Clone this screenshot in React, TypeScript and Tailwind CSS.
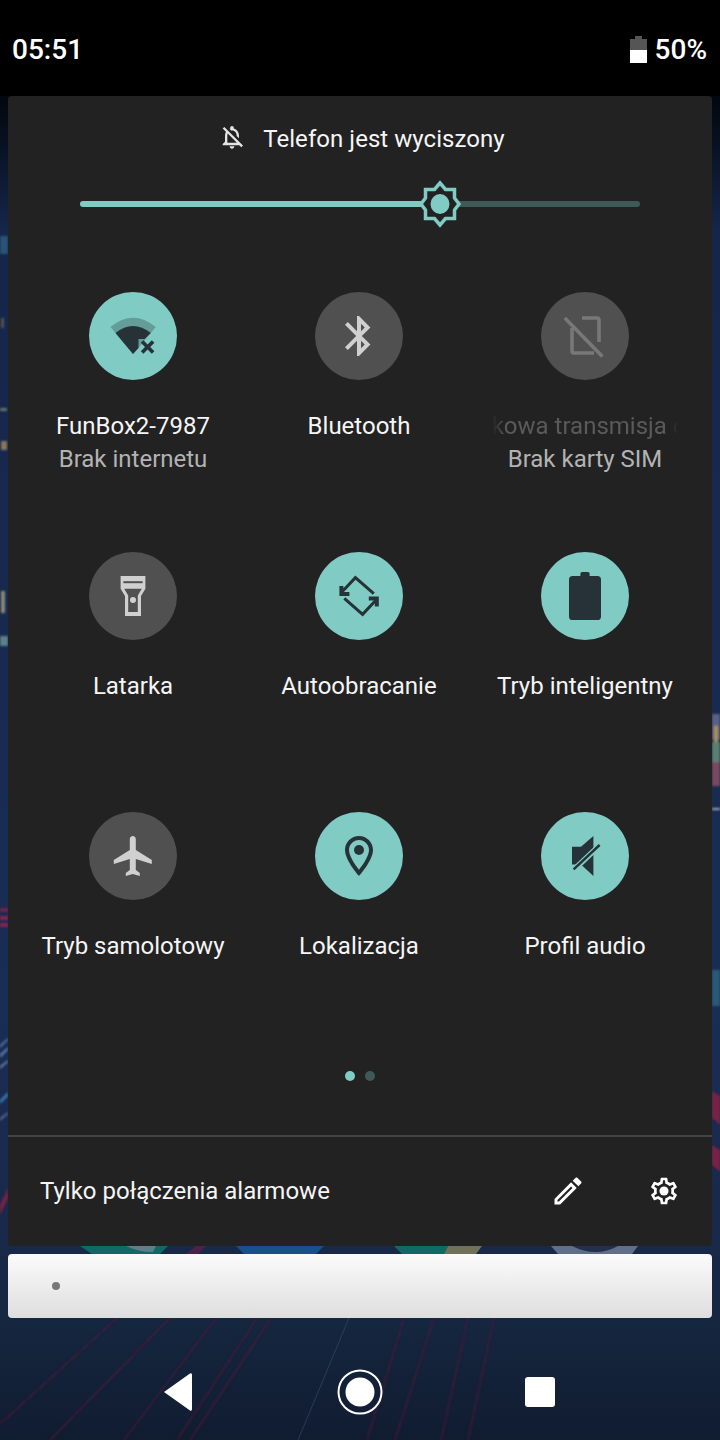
import React from 'react';

const DARK = '#263238';
const LIGHT = '#d0d0d0';

const Wallpaper = () => (
  <svg className="absolute inset-0 h-full w-full" viewBox="0 0 720 1440">
    <defs>
      <linearGradient id="wall" x1="0" y1="0" x2="0" y2="1">
        <stop offset="0" stopColor="#000000" />
        <stop offset="0.07" stopColor="#03070f" />
        <stop offset="0.16" stopColor="#14264a" />
        <stop offset="0.7" stopColor="#1a2d55" />
        <stop offset="0.86" stopColor="#18294a" />
        <stop offset="0.92" stopColor="#15263f" />
        <stop offset="1" stopColor="#101c30" />
      </linearGradient>
      <filter id="soft">
        <feGaussianBlur stdDeviation="1.2" />
      </filter>
      <filter id="trail">
        <feGaussianBlur stdDeviation="0.8" />
      </filter>
    </defs>
    <rect width="720" height="1440" fill="url(#wall)" />
    {/* left edge streaks */}
    <g filter="url(#soft)">
      <rect x="0" y="236" width="8" height="18" fill="#2f5f80" opacity="0.8" />
      <rect x="1" y="318" width="3" height="10" fill="#8a6a50" opacity="0.6" />
      <rect x="0" y="408" width="7" height="3" fill="#8a8f80" opacity="0.7" />
      <rect x="1" y="441" width="6" height="9" fill="#a88a60" opacity="0.8" />
      <rect x="1" y="591" width="4" height="22" fill="#8c8a78" />
      <rect x="0" y="636" width="8" height="10" fill="#5b8088" />
      <rect x="0" y="908" width="8" height="4" fill="#6d2048" />
      <rect x="0" y="916" width="8" height="4" fill="#8a2348" />
      <rect x="0" y="923" width="8" height="4" fill="#8a2348" />
      <path d="M0 1045L8 1038V1040L0 1048Z" fill="#5a7aa8" />
      <path d="M0 1054L8 1047V1050L0 1058Z" fill="#5a7aa8" />
      <path d="M0 1066L8 1060V1062L0 1069Z" fill="#6a80a0" />
      <path d="M0 1100L8 1092V1096L0 1104Z" fill="#3d78b0" />
      <path d="M0 1118L8 1112V1114L0 1121Z" fill="#5a6a90" />
      <path d="M0 1205L8 1188V1198L0 1215Z" fill="#7a2044" />
    </g>
    {/* right edge streaks */}
    <g filter="url(#soft)">
      <rect x="712" y="714" width="8" height="26" fill="#5b6088" />
      <rect x="714" y="726" width="4" height="18" fill="#a89050" />
      <rect x="712" y="742" width="8" height="20" fill="#5a8070" />
      <rect x="712" y="762" width="8" height="24" fill="#7a4a60" />
      <rect x="712" y="808" width="8" height="2" fill="#a0a8b8" />
      <rect x="712" y="970" width="8" height="36" fill="#2c5a78" />
      <path d="M712 1091L720 1096V1125L712 1118Z" fill="#7a2044" />
      <path d="M712 1145L720 1150V1172L712 1165Z" fill="#7a2044" />
    </g>
    {/* dock icons peeking out behind the panel */}
    <path d="M80 1246H168L160 1254H92Z" fill="#0f6a66" />
    <path d="M126 1246H156L153 1252Q138 1252 126 1246Z" fill="#5f7d8a" />
    <path d="M236 1246H324L316 1254H244Z" fill="#1a4f8a" />
    <path d="M394 1246H448L444 1254H402Z" fill="#0f6a66" />
    <path d="M448 1246H482L476 1254H444Z" fill="#6f7258" />
    <path d="M551 1246H638L632 1254H558Z" fill="#5f6f8a" />
    <path d="M572 1246H618Q596 1258 572 1246Z" fill="#22304e" />
    <path d="M186 1254L196 1246H206L198 1254Z" fill="#5a2048" opacity="0.8" />
    {/* road light trails */}
    <g stroke="#4e1a3a" strokeWidth="2" opacity="0.65" fill="none" filter="url(#trail)">
      <path d="M117 1318L0 1424" />
      <path d="M170 1318L50 1440" />
      <path d="M216 1318L124 1440" />
      <path d="M257 1318L177 1440" />
      <path d="M271 1318L190 1440" />
      <path d="M404 1318L367 1440" />
      <path d="M434 1318L395 1440" />
      <path d="M468 1318L441 1440" />
      <path d="M494 1318L468 1440" />
    </g>
    <path d="M349 1318L298 1440" stroke="#34476a" strokeWidth="1" opacity="0.7" />
  </svg>
);

const WifiIcon = () => (
  <svg width="48" height="48" viewBox="0 0 24 24" fill={DARK}>
    <path d="M.75 7.5Q12-1.8 23.35 7.5L14.75 18 12 21Z" opacity="0.3" />
    <path d="M3.25 10.5Q12 3.5 20.9 10.5L17.8 13.5H14.75V18L12 21Z" />
    <path d="M15.9 15.4L17.2 14.1L19.3 16.2L21.4 14.1L22.7 15.4L20.6 17.5L22.7 19.6L21.4 20.9L19.3 18.8L17.2 20.9L15.9 19.6L18 17.5Z" />
  </svg>
);

const BluetoothIcon = () => (
  <svg width="48" height="48" viewBox="0 0 24 24" fill={LIGHT}>
    <path d="M17.71 7.71L12 2h-1v7.59L6.41 5 5 6.41 10.59 12 5 17.59 6.41 19 11 14.41V22h1l5.71-5.71-4.3-4.29 4.3-4.29zM13 5.83l1.88 1.88L13 9.59V5.83zm1.88 10.46L13 18.17v-3.76l1.88 1.88z" />
  </svg>
);

const SimOffIcon = () => (
  <svg width="48" height="48" viewBox="0 0 24 24" fill="none" stroke="#787878" strokeWidth="1.8">
    <path d="M10.5 3H18Q19 3 19 4V15M5.5 8V19.5Q5.5 20.5 6.5 20.5H16.5" />
    <path d="M1.9 3L20.7 22.2" />
  </svg>
);

const FlashlightIcon = () => (
  <svg width="48" height="48" viewBox="0 0 24 24" fill={LIGHT}>
    <path d="M5.8 2H18.2V8.4L16 12V22H8V12L5.8 8.4Z" />
    <path d="M7.2 4.6H16.8V5.6H7.2Z" fill="#505050" />
    <path d="M7.6 8.4H16.4L14.4 11.8V20H9.6V11.8Z" fill="#505050" />
    <circle cx="12" cy="14" r="1.5" />
  </svg>
);

const RotateIcon = () => (
  <svg width="48" height="48" viewBox="0 0 24 24" fill="none" stroke={DARK} strokeWidth="1.5">
    <path d="M19.4 10.85L10.2 2.8L3.8 9.6" />
    <path d="M3.2 7V11H7.2" strokeWidth="2" />
    <path d="M4.65 13.15L13.8 21.2L20.2 14.4" />
    <path d="M16.9 13.2H20.9V17.2" strokeWidth="2" />
  </svg>
);

const BatteryIcon = () => (
  <svg width="48" height="48" viewBox="0 0 24 24" fill={DARK}>
    <path d="M9.7.8Q9.7 0 10.5 0H13.5Q14.3 0 14.3.8V2H18.2Q20 2 20 3.8V22.2Q20 24 18.2 24H5.8Q4 24 4 22.2V3.8Q4 2 5.8 2H9.7Z" />
  </svg>
);

const PlaneIcon = () => (
  <svg width="48" height="48" viewBox="0 0 24 24" fill={LIGHT}>
    <path transform="translate(0.4 0)" d="M21 16v-2l-8-5V3.5c0-.83-.67-1.5-1.5-1.5S10 2.67 10 3.5V9l-8 5v2l8-2.5V19l-2 1.5V22l3.5-1 3.5 1v-1.5L13 19v-5.5l8 2.5z" />
  </svg>
);

const PinIcon = () => (
  <svg width="48" height="48" viewBox="0 0 24 24" fill={DARK}>
    <path d="M12 2C8.13 2 5 5.13 5 9c0 5.25 7 13 7 13s7-7.75 7-13c0-3.87-3.13-7-7-7zM7 9c0-2.76 2.24-5 5-5s5 2.24 5 5c0 2.88-2.88 7.19-5 9.88C9.92 16.21 7 11.85 7 9z" />
    <circle cx="12" cy="9" r="2.5" />
  </svg>
);

const MuteIcon = () => (
  <svg width="48" height="48" viewBox="0 0 24 24" fill="none">
    <path d="M5.5 7.4H10L16.2 2V22L10 16.2H5.5Z" fill={DARK} />
    <path d="M20 6L6.3 19" stroke="#80cbc4" strokeWidth="2.8" />
    <path d="M19.3 6.5L6.3 18.7" stroke={DARK} strokeWidth="1.2" />
  </svg>
);

const BellOffIcon = () => (
  <svg width="28" height="28" viewBox="0 0 24 24" fill="#e4e4e4">
    <path d="M12 22c1.1 0 2-.9 2-2h-4c0 1.1.9 2 2 2zM12 6.5c2.49 0 4 2.02 4 4.5v.1l2 2V11c0-3.07-1.63-5.64-4.5-6.32V4c0-.83-.67-1.5-1.5-1.5s-1.5.67-1.5 1.5v.68c-.24.06-.47.15-.69.23l1.64 1.64c.18-.02.36-.05.55-.05zM5.41 3.35L4 4.76l2.81 2.81C6.29 8.57 6 9.74 6 11v5l-2 2v1h14.24l1.74 1.74 1.41-1.41L5.41 3.35zM16 17H8v-6c0-.68.12-1.32.34-1.9L16 16.76V17z" />
  </svg>
);

const BrightnessThumb = () => (
  <svg className="absolute left-[336px] top-0" width="48" height="48" viewBox="0 0 48 48">
    <path
      d="M24 3L29.5 9.5H38.5V18L43 24L38.5 30V38.5H29.5L24 45L18.5 38.5H9.5V30L5 24L9.5 18V9.5H18.5Z"
      fill="#222222"
      stroke="#80cbc4"
      strokeWidth="3.5"
    />
    <ellipse cx="24" cy="24" rx="9.5" ry="10" fill="#80cbc4" />
  </svg>
);

const PencilIcon = () => (
  <svg width="36" height="36" viewBox="0 0 24 24" fill="#ffffff">
    <path d="M14.06 9.02l.92.92L5.92 19H5v-.92l9.06-9.06M17.66 3c-.25 0-.51.1-.7.29l-1.83 1.83 3.75 3.75 1.83-1.83c.39-.39.39-1.02 0-1.41l-2.34-2.34c-.2-.2-.45-.29-.71-.29zm-3.6 3.19L3 17.25V21h3.75L17.81 9.94l-3.75-3.75z" />
  </svg>
);

const GearIcon = () => (
  <svg width="32" height="32" viewBox="0 0 24 24" fill="#ffffff">
    <path d="M19.43 12.98c.04-.32.07-.64.07-.98 0-.34-.03-.66-.07-.98l2.11-1.65c.19-.15.24-.42.12-.64l-2-3.46c-.09-.16-.26-.25-.44-.25-.06 0-.12.01-.17.03l-2.49 1c-.52-.4-1.08-.73-1.69-.98l-.38-2.65C14.46 2.18 14.25 2 14 2h-4c-.25 0-.46.18-.49.42l-.38 2.65c-.61.25-1.17.59-1.69.98l-2.49-1c-.06-.02-.12-.03-.18-.03-.17 0-.34.09-.43.25l-2 3.46c-.13.22-.07.49.12.64l2.11 1.65c-.04.32-.07.65-.07.98 0 .33.03.66.07.98l-2.11 1.65c-.19.15-.24.42-.12.64l2 3.46c.09.16.26.25.44.25.06 0 .12-.01.17-.03l2.49-1c.52.4 1.08.73 1.69.98l.38 2.65c.03.24.24.42.49.42h4c.25 0 .46-.18.49-.42l.38-2.65c.61-.25 1.17-.59 1.69-.98l2.49 1c.06.02.12.03.18.03.17 0 .34-.09.43-.25l2-3.46c.12-.22.07-.49-.12-.64l-2.11-1.65zm-1.98-1.71c.04.31.05.52.05.73 0 .21-.02.43-.05.73l-.14 1.13.89.7 1.08.84-.7 1.21-1.27-.51-1.04-.42-.9.68c-.43.32-.84.56-1.25.73l-1.06.43-.16 1.13-.2 1.35h-1.4l-.19-1.35-.16-1.13-1.06-.43c-.43-.18-.83-.41-1.23-.71l-.91-.7-1.06.43-1.27.51-.7-1.21 1.08-.84.89-.7-.14-1.13c-.03-.31-.05-.54-.05-.74s.02-.43.05-.73l.14-1.13-.89-.7-1.08-.84.7-1.21 1.27.51 1.04.42.9-.68c.43-.32.84-.56 1.25-.73l1.06-.43.16-1.13.2-1.35h1.39l.19 1.35.16 1.13 1.06.43c.43.18.83.41 1.23.71l.91.7 1.06-.43 1.27-.51.7 1.21-1.07.85-.89.7.14 1.13z" />
    <circle cx="12" cy="12" r="3.4" />
  </svg>
);

const Tile = ({ on, icon, label, sub, dim }: { on?: boolean; icon: React.ReactNode; label: string; sub?: string; dim?: boolean }) => (
  <div className="flex flex-col items-center">
    <div className={`flex h-[88px] w-[88px] items-center justify-center rounded-full ${on ? 'bg-[#80cbc4]' : 'bg-[#505050]'}`}>
      {icon}
    </div>
    {dim ? (
      <div className="mt-[30px] flex w-[186px] justify-center overflow-hidden whitespace-nowrap text-[#5a5a5a] [mask-image:linear-gradient(to_right,transparent,black_14px,black_172px,transparent)]">
        <span className="shrink-0 text-[24px] leading-[33px]">{label}</span>
      </div>
    ) : (
      <div className="mt-[30px] whitespace-nowrap text-[24px] leading-[33px] text-[#f5f5f5]">{label}</div>
    )}
    {sub && <div className="whitespace-nowrap text-[24px] leading-[33px] text-[#b3b3b3]">{sub}</div>}
  </div>
);

export default function App() {
  return (
    <div className="relative h-[1440px] w-[720px] overflow-hidden font-['Roboto',sans-serif]">
      <Wallpaper />
      <div className="relative flex h-full flex-col">
        {/* status bar */}
        <div className="flex h-[96px] items-start justify-between bg-black pl-[12px] pr-[13px] pt-[33px] text-white">
          <span className="text-[28px] font-medium leading-[33px]">05:51</span>
          <div className="flex items-center gap-[8px]">
            <div className="flex h-[27px] w-[17px] flex-col items-center">
              <div className="h-[3px] w-[7px] bg-[#555555]" />
              <div className="h-[11px] w-full bg-[#555555]" />
              <div className="h-[13px] w-full bg-white" />
            </div>
            <span className="text-[28px] font-medium leading-[33px]">50%</span>
          </div>
        </div>

        {/* quick settings panel */}
        <div className="mx-2 flex h-[1150px] flex-col rounded-[4px] bg-[#222222]">
          <div className="flex h-[84px] items-start justify-center gap-[17px] pl-[3px] pt-[27px]">
            <BellOffIcon />
            <span className="text-[24px] leading-[33px] tracking-[0.05px] text-[#f5f5f5]">Telefon jest wyciszony</span>
          </div>

          <div className="relative ml-[72px] h-[48px] w-[560px]">
            <div className="absolute left-0 top-[21px] h-[6px] w-[350px] rounded-l-full bg-[#80cbc4]" />
            <div className="absolute right-0 top-[21px] h-[6px] w-[210px] rounded-r-full bg-[#3f5a56]" />
            <BrightnessThumb />
          </div>

          <div className="ml-[12px] mt-[64px] grid grid-cols-[repeat(3,226px)] grid-rows-[260px_260px_170px]">
            <Tile on icon={<WifiIcon />} label="FunBox2-7987" sub="Brak internetu" />
            <Tile icon={<BluetoothIcon />} label="Bluetooth" />
            <Tile dim icon={<SimOffIcon />} label="Komórkowa transmisja danych" sub="Brak karty SIM" />
            <Tile icon={<FlashlightIcon />} label="Latarka" />
            <Tile on icon={<RotateIcon />} label="Autoobracanie" />
            <Tile on icon={<BatteryIcon />} label="Tryb inteligentny" />
            <Tile icon={<PlaneIcon />} label="Tryb samolotowy" />
            <Tile on icon={<PinIcon />} label="Lokalizacja" />
            <Tile on icon={<MuteIcon />} label="Profil audio" />
          </div>

          <div className="mt-[89px] flex justify-center gap-[10px]">
            <div className="h-[10px] w-[10px] rounded-full bg-[#80cbc4]" />
            <div className="h-[10px] w-[10px] rounded-full bg-[#3f5a56]" />
          </div>

          <div className="mt-[54px] h-[2px] bg-[#444444]" />

          <div className="flex flex-1 items-center pl-[32px] pr-[32px]">
            <span className="flex-1 text-[24px] leading-[33px] text-[#f5f5f5]">Tylko połączenia alarmowe</span>
            <div className="-mt-[2px] flex items-center gap-[62px]">
              <PencilIcon />
              <GearIcon />
            </div>
          </div>
        </div>

        {/* search bar */}
        <div className="mx-2 mt-2 flex h-[64px] items-center rounded-[4px] bg-gradient-to-b from-[#fbfbfb] to-[#dedede] pl-[44px]">
          <div className="h-2 w-2 rounded-full bg-[#777777]" />
        </div>

        {/* nav bar */}
        <div className="flex flex-1 items-start pt-[44px]">
          <svg width="720" height="60" viewBox="0 0 720 60" fill="#ffffff">
            <path d="M164 30L190 11.5Q192 10.5 192 13V47Q192 49.5 190 48.5Z" />
            <circle cx="360" cy="30" r="21.5" fill="none" stroke="#ffffff" strokeWidth="2" />
            <circle cx="360" cy="30" r="14.5" />
            <rect x="525" y="15" width="30" height="30" rx="3" />
          </svg>
        </div>
      </div>
    </div>
  );
}
